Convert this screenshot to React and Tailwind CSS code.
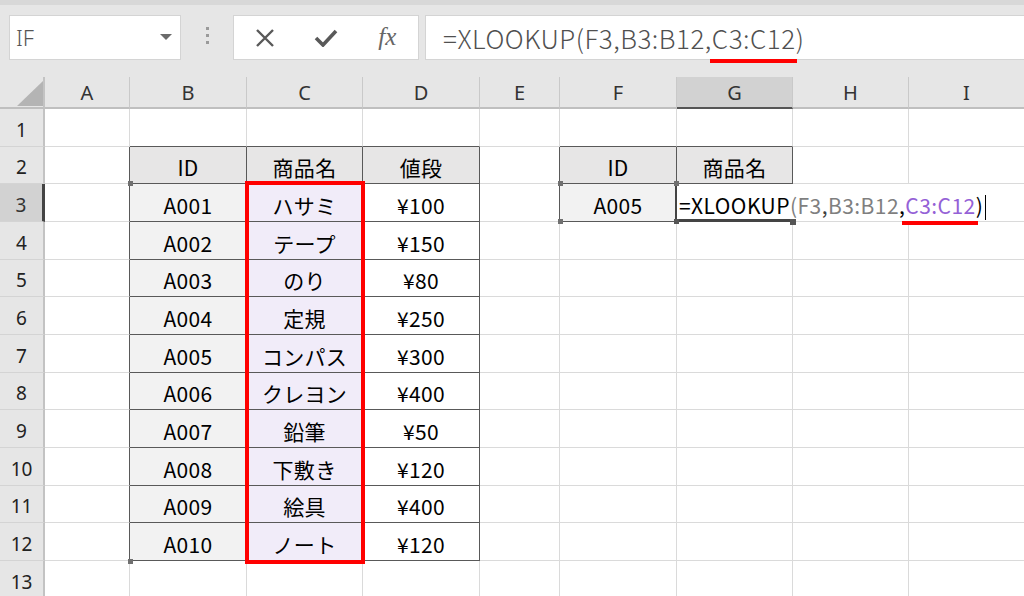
import React from 'react';

const colW = ['w-[85px]', 'w-[117px]', 'w-[116px]', 'w-[117px]', 'w-[80px]', 'w-[117px]', 'w-[116px]', 'w-[116px]', 'w-[116px]'];
const letters = ['A', 'B', 'C', 'D', 'E', 'F', 'G', 'H', 'I'];
const rowH = ['h-[38px]', 'h-[37px]', 'h-[38px]', 'h-[38px]', 'h-[37px]', 'h-[38px]', 'h-[38px]', 'h-[37px]', 'h-[38px]', 'h-[38px]', 'h-[37px]', 'h-[38px]', 'h-[38px]'];

const items = [
  ['A001', 'ハサミ', '¥100'],
  ['A002', 'テープ', '¥150'],
  ['A003', 'のり', '¥80'],
  ['A004', '定規', '¥250'],
  ['A005', 'コンパス', '¥300'],
  ['A006', 'クレヨン', '¥400'],
  ['A007', '鉛筆', '¥50'],
  ['A008', '下敷き', '¥120'],
  ['A009', '絵具', '¥400'],
  ['A010', 'ノート', '¥120'],
];

function inT(r, c) {
  return (r >= 2 && r <= 12 && c >= 1 && c <= 3) || (r >= 2 && r <= 3 && c >= 5 && c <= 6);
}

function value(r, c) {
  if (r === 2) {
    if (c === 1 || c === 5) return 'ID';
    if (c === 2 || c === 6) return '商品名';
    if (c === 3) return '値段';
  }
  if (r >= 3 && r <= 12 && c >= 1 && c <= 3) return items[r - 3][c - 1];
  if (r === 3 && c === 5) return 'A005';
  return '';
}

function bgOf(r, c) {
  if (r === 2 && inT(r, c)) return 'bg-[#e7e6e6]';
  if (c === 1 && r >= 3 && r <= 12) return 'bg-[#f2f2f2]';
  if (c === 2 && r >= 3 && r <= 12) return 'bg-[#f1ecf9]';
  if (r === 3 && c === 5) return 'bg-[#f2f2f2]';
  return 'bg-white';
}

function EditText() {
  return (
    <div className="absolute left-[2px] top-0 bottom-0 z-10 bg-white flex items-end pb-[5px] pr-[2px] whitespace-nowrap text-[21px] leading-[21px] tracking-[0.45px] text-black">
      <span>=XLOOKUP</span>
      <span className="text-[#7f7f7f]">(F3</span>
      <span className="text-[#404040]">,</span>
      <span className="text-[#7f7f7f]">B3:B12</span>
      <span>,</span>
      <span className="relative text-[#9461d6]">
        C3:C12
        <span className="absolute left-[-3px] right-[-2px] bottom-[-9px] h-[4px] bg-[#ff0000]" />
      </span>
      <span>)</span>
      <span className="ml-[2px] w-[1px] h-[25px] bg-black self-end mb-[-4px]" />
    </div>
  );
}

function Row({ r }) {
  const isSel = r === 3;
  return (
    <div className={`flex ${rowH[r - 1]}`}>
      <div
        className={`w-[45px] shrink-0 border-b border-b-[#d4d4d4] flex items-end justify-center pb-[6px] text-[19px] leading-[19px] font-['Noto_Sans',sans-serif] ${
          isSel ? 'bg-[#d2d2d2] border-r-[3px] border-r-[#444] text-[#333]' : 'bg-[#e6e6e6] border-r-2 border-r-[#c3c3c3] text-[#222]'
        }`}
      >
        {r}
      </div>
      {letters.map((l, c) => {
        const right = inT(r, c) || inT(r, c + 1) ? 'border-r-[#595959]' : 'border-r-[#dadada]';
        const bottom = inT(r, c) || inT(r + 1, c) ? 'border-b-[#595959]' : 'border-b-[#dadada]';
        const editing = r === 3 && c === 6;
        return (
          <div
            key={l}
            className={`${colW[c]} shrink-0 border-r border-b ${right} ${bottom} ${bgOf(r, c)} ${
              editing ? 'relative' : ''
            } flex items-end justify-center pb-[5px] text-[21px] leading-[21px] text-black tracking-[0.3px]`}
          >
            {editing ? <EditText /> : value(r, c)}
          </div>
        );
      })}
    </div>
  );
}

export default function App() {
  const rows = [1, 2, 3, 4, 5, 6, 7, 8, 9, 10, 11, 12, 13];
  return (
    <div className="w-[1024px] h-[596px] overflow-hidden bg-white relative font-['Noto_Sans_CJK_JP',sans-serif]">
      <div className="h-[5px] bg-[#d8d8d8]" />
      <div className="h-[72px] bg-[#e6e6e6] flex items-start pt-[10px]">
        <div className="ml-[9px] w-[172px] h-[45px] shrink-0 bg-white border border-[#d4d4d4] flex items-center justify-between pl-[6px] pr-[8px]">
          <span className="text-[22px] text-[#555] font-['Noto_Sans',sans-serif] font-light">IF</span>
          <svg width="12" height="7" viewBox="0 0 12 7">
            <polygon points="0,0 12,0 6,6" fill="#6b6b6b" />
          </svg>
        </div>
        <div className="w-[52px] shrink-0 flex flex-col items-center gap-[4px] pt-[12px]">
          <div className="w-[3px] h-[3px] bg-[#9a9a9a]" />
          <div className="w-[3px] h-[3px] bg-[#9a9a9a]" />
          <div className="w-[3px] h-[3px] bg-[#9a9a9a]" />
        </div>
        <div className="w-[186px] h-[45px] shrink-0 bg-white border border-[#d4d4d4] grid grid-cols-3 items-center justify-items-center">
          <svg width="22" height="18" viewBox="0 0 22 18">
            <path d="M3 1 L19 17 M19 1 L3 17" stroke="#595959" strokeWidth="2.4" />
          </svg>
          <svg width="24" height="18" viewBox="0 0 24 18">
            <path d="M2 9 L9 16 L22 2" stroke="#595959" strokeWidth="3.6" fill="none" />
          </svg>
          <span className="font-['Liberation_Serif',serif] italic text-[25px] leading-[25px] text-[#666] pb-[2px]">fx</span>
        </div>
        <div className="ml-[6px] flex-1 h-[45px] bg-white border border-[#d4d4d4] mr-[-4px] flex items-center pl-[17px] text-[26px] font-light text-[#505050] tracking-[0.5px] whitespace-nowrap">
          <span>=XLOOKUP(F3,B3:B12,</span>
          <span className="relative">
            C3:C12
            <span className="absolute left-[-2px] right-[-1px] bottom-[-6px] h-[4px] bg-[#ff0000]" />
          </span>
          <span>)</span>
        </div>
      </div>

      <div className="flex h-[32px] bg-[#e6e6e6] font-['Noto_Sans',sans-serif]">
        <div className="w-[45px] shrink-0 border-r-2 border-r-[#c3c3c3] border-b-2 border-b-[#bfbfbf]">
          <svg width="43" height="30" viewBox="0 0 43 30" className="block">
            <polygon points="17,29 43,29 43,4" fill="#b4b4b4" />
          </svg>
        </div>
        {letters.map((l, c) => (
          <div
            key={l}
            className={`${colW[c]} shrink-0 border-r border-r-[#c9c9c9] border-b-2 flex items-end justify-center pb-[4px] text-[20px] leading-[20px] text-[#333] ${
              c === 6 ? 'bg-[#d2d2d2] border-b-[#555]' : 'border-b-[#bfbfbf]'
            }`}
          >
            {l}
          </div>
        ))}
      </div>

      {rows.map((r) => (
        <Row key={r} r={r} />
      ))}

      {/* reference range highlight */}
      <div className="absolute left-[245px] top-[181px] w-[120px] h-[383px] border-4 border-[#ff0000] pointer-events-none" />

      {/* G3 selection border */}
      <div className="absolute left-[675px] top-[183px] w-[2px] h-[39px] bg-[#444] z-20" />
      <div className="absolute left-[675px] top-[219px] w-[119px] h-[3px] bg-[#444] z-20" />

      {/* handles */}
      <div className="absolute left-[128px] top-[181px] w-[5px] h-[5px] bg-[#707070] z-20" />
      <div className="absolute left-[128px] top-[559px] w-[5px] h-[5px] bg-[#707070] z-20" />
      <div className="absolute left-[558px] top-[181px] w-[5px] h-[5px] bg-[#707070] z-20" />
      <div className="absolute left-[674px] top-[181px] w-[5px] h-[5px] bg-[#707070] z-20" />
      <div className="absolute left-[558px] top-[219px] w-[5px] h-[5px] bg-[#707070] z-20" />
      <div className="absolute left-[674px] top-[219px] w-[5px] h-[5px] bg-[#555] z-20" />
      <div className="absolute left-[790px] top-[219px] w-[6px] h-[6px] bg-[#555] z-20" />
    </div>
  );
}
